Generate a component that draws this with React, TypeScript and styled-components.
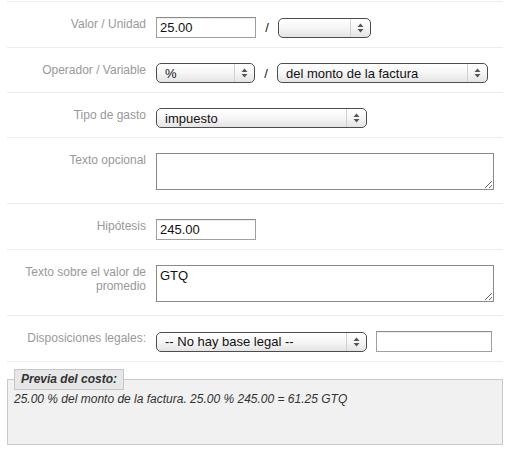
import React from "react";
import styled, { createGlobalStyle } from "styled-components";

const Global = createGlobalStyle`
  html, body { margin: 0; padding: 0; background: #fff; }
  body { font-family: "Liberation Sans", Arial, sans-serif; }
  * { box-sizing: border-box; }
`;

const Page = styled.div`
  padding: 0 3px 0 7px;
  width: 506px;
`;

const Form = styled.div`
  margin-top: 1px;
  border-top: 1px solid #ececec;
`;

const Row = styled.div`
  display: flex;
  align-items: flex-start;
  gap: 10px;
  padding: 15px 0 9px;
  border-bottom: 1px solid #ececec;
`;

const Label = styled.div`
  flex: 0 0 139px;
  text-align: right;
  font-size: 12px;
  line-height: 14px;
  color: #999;
`;

const Controls = styled.div`
  display: flex;
  align-items: center;
`;

const TextInput = styled.input<{ $w: number }>`
  width: ${(p) => p.$w}px;
  height: 21px;
  margin: 0;
  padding: 0 3px;
  border: 1px solid #a0a0a0;
  border-top-color: #8c8c8c;
  box-shadow: inset 0 1px 1px rgba(0, 0, 0, 0.08);
  font-family: "Liberation Sans", Arial, sans-serif;
  font-size: 13px;
  color: #111;
  background: #fff;
  outline: none;
`;

const TextArea = styled.textarea`
  display: block;
  width: 338px;
  height: 37px;
  margin: 0 0 4px;
  padding: 2px 3px;
  border: 1px solid #8a8a8a;
  font-family: "Liberation Sans", Arial, sans-serif;
  font-size: 13px;
  line-height: 15px;
  color: #111;
  background: #fff;
  outline: none;
`;

const SelectBox = styled.div<{ $w: number }>`
  display: inline-flex;
  align-items: stretch;
  width: ${(p) => p.$w}px;
  height: 20px;
  border: 1px solid #4d4d4d;
  border-radius: 5px;
  background: linear-gradient(#ffffff 0%, #f7f7f7 45%, #e4e4e4 100%);
  box-shadow: inset 0 1px 0 #fff;
  font-size: 13px;
  color: #111;
  overflow: hidden;
`;

const SelectValue = styled.span`
  flex: 1;
  display: flex;
  align-items: center;
  padding-left: 8px;
  white-space: nowrap;
  overflow: hidden;
`;

const SelectArrow = styled.span`
  flex: 0 0 20px;
  display: flex;
  align-items: center;
  justify-content: center;
  border-left: 1px solid #d0d0d0;
`;

const Slash = styled.span`
  width: 22px;
  text-align: center;
  font-size: 13px;
  color: #111;
`;

const Spacer = styled.span`
  width: 9px;
`;

const Preview = styled.fieldset`
  margin: 7px 0 0;
  padding: 0 6px;
  border: 1px solid #c9c9c9;
  background: #f1f1f1;
  min-width: 0;
`;

const Legend = styled.legend`
  padding: 0 6px;
  height: 21px;
  line-height: 19px;
  border: 1px solid #c6c6c6;
  background: #e7e7e7;
  font-size: 12px;
  font-weight: bold;
  font-style: italic;
  color: #333;
`;

const PreviewText = styled.div`
  height: 54px;
  padding-top: 2px;
  font-size: 12px;
  line-height: 15px;
  font-style: italic;
  color: #333;
`;

const Arrows = () => (
  <svg width="7" height="10" viewBox="0 0 7 10">
    <path d="M3.5 0.5 L6.5 4 L0.5 4 Z" fill="#555" />
    <path d="M3.5 9.5 L6.5 6 L0.5 6 Z" fill="#555" />
  </svg>
);

const Select = ({ w, value }: { w: number; value: string }) => (
  <SelectBox $w={w}>
    <SelectValue>{value}</SelectValue>
    <SelectArrow>
      <Arrows />
    </SelectArrow>
  </SelectBox>
);

export default function App() {
  return (
    <Page>
      <Global />
      <Form>
        <Row>
          <Label>Valor / Unidad</Label>
          <Controls>
            <TextInput $w={100} defaultValue="25.00" />
            <Slash>/</Slash>
            <Select w={93} value="" />
          </Controls>
        </Row>
        <Row>
          <Label>Operador / Variable</Label>
          <Controls>
            <Select w={99} value="%" />
            <Slash>/</Slash>
            <Select w={211} value="del monto de la factura" />
          </Controls>
        </Row>
        <Row>
          <Label>Tipo de gasto</Label>
          <Controls>
            <Select w={211} value="impuesto" />
          </Controls>
        </Row>
        <Row>
          <Label>Texto opcional</Label>
          <TextArea defaultValue="" />
        </Row>
        <Row>
          <Label>Hipótesis</Label>
          <Controls>
            <TextInput $w={100} defaultValue="245.00" />
          </Controls>
        </Row>
        <Row>
          <Label>Texto sobre el valor de promedio</Label>
          <TextArea defaultValue="GTQ" />
        </Row>
        <Row>
          <Label>Disposiciones legales:</Label>
          <Controls>
            <Select w={211} value="-- No hay base legal --" />
            <Spacer />
            <TextInput $w={116} defaultValue="" />
          </Controls>
        </Row>
      </Form>
      <Preview>
        <Legend>Previa del costo:</Legend>
        <PreviewText>
          25.00 % del monto de la factura. 25.00 % 245.00 = 61.25 GTQ
        </PreviewText>
      </Preview>
    </Page>
  );
}
